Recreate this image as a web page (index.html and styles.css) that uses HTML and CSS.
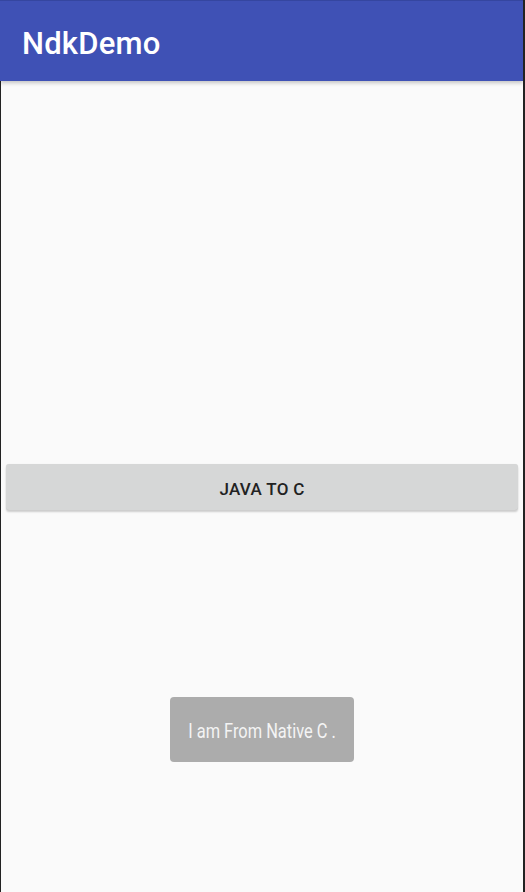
FILE: index.html
```html
<!DOCTYPE html>
<html>
<head>
<meta charset="utf-8">
<link rel="stylesheet" href="styles.css">
</head>
<body>
<div class="screen">
  <header class="appbar"><h1 class="title">NdkDemo</h1></header>
  <main class="content">
    <button class="btn">JAVA TO C</button>
  </main>
  <div class="toast"><span class="toast-text">I am From Native C .</span></div>
</div>
</body>
</html>
```
FILE: styles.css
```css
html, body { margin: 0; padding: 0; }
body { background: #fafafa; font-family: Roboto, "Noto Sans", sans-serif; }
.screen {
  position: relative;
  width: 525px;
  height: 892px;
  box-sizing: border-box;
  display: flex;
  flex-direction: column;
  background: #fafafa;
  border-right: 2px solid #222;
  overflow: hidden;
}
.appbar {
  height: 81px;
  flex: none;
  background: #3f51b5;
  border-top: 1px solid #3546a0;
  box-sizing: border-box;
  display: flex;
  align-items: center;
  padding-left: 22px;
  padding-top: 5px;
  box-shadow: 0 2px 4px rgba(0,0,0,0.22);
  position: relative;
  z-index: 1;
}
.title {
  margin: 0;
  color: #fff;
  font-size: 31px;
  font-weight: 500;
  letter-spacing: 0.2px;
}
.content {
  flex: 1;
  border-left: 1px solid #222;
  display: flex;
  flex-direction: column;
  padding: 383px 5px 0 5px;
}
.btn {
  height: 46px;
  border: none;
  border-radius: 3px;
  background: #d6d7d7;
  box-shadow: 0 2px 2px rgba(0,0,0,0.18), 0 0 1px rgba(0,0,0,0.1);
  font-family: Roboto, sans-serif;
  font-weight: 500;
  font-size: 17px;
  color: #222;
  letter-spacing: 0.3px;
  padding: 3px 0 0 0;
}
.toast {
  position: absolute;
  left: 170px;
  top: 697px;
  width: 184px;
  height: 65px;
  border-radius: 4px;
  background: #acacac;
  color: #f4f4f4;
  font-size: 20px;
  display: flex;
  align-items: center;
  justify-content: center;
  padding-top: 3px;
  box-sizing: border-box;
}
.toast-text {
  display: inline-block;
  white-space: nowrap;
  transform: scaleX(0.82);
}
```
